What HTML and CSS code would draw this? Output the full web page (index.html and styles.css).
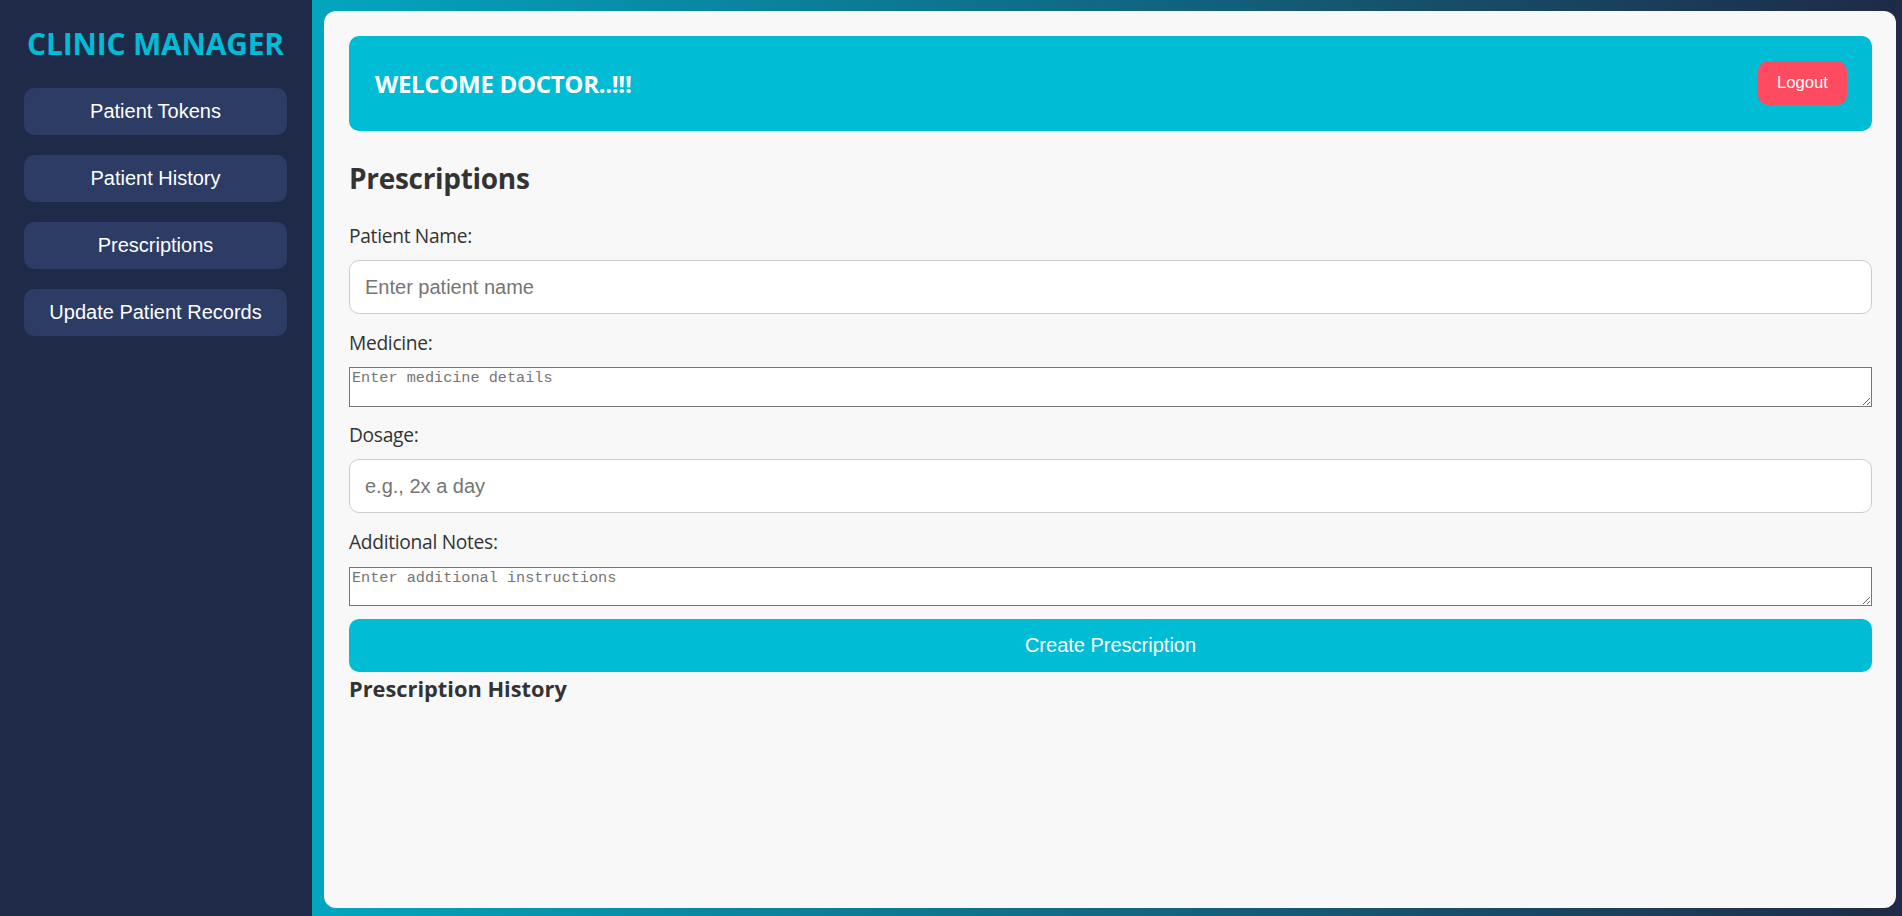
FILE: index.html
```html
<!DOCTYPE html>
<html lang="en">
<head>
<meta charset="utf-8">
<title>Clinic Manager</title>
<link rel="stylesheet" href="styles.css">
</head>
<body>
  <aside class="sidebar">
    <h2 class="brand">CLINIC MANAGER</h2>
    <nav class="nav">
      <button class="nav-btn">Patient Tokens</button>
      <button class="nav-btn">Patient History</button>
      <button class="nav-btn">Prescriptions</button>
      <button class="nav-btn">Update Patient Records</button>
    </nav>
  </aside>
  <main class="main">
    <section class="card">
      <header class="topbar">
        <h3 class="welcome">WELCOME DOCTOR..!!!</h3>
        <button class="logout">Logout</button>
      </header>
      <h2 class="page-title">Prescriptions</h2>
      <form class="form">
        <label class="lbl lbl-first" for="pname">Patient Name:</label>
        <input class="field field-1" id="pname" type="text" placeholder="Enter patient name">
        <label class="lbl lbl-2" for="med">Medicine:</label>
        <textarea class="area area-1" id="med" placeholder="Enter medicine details"></textarea>
        <label class="lbl lbl-3" for="dose">Dosage:</label>
        <input class="field field-2" id="dose" type="text" placeholder="e.g., 2x a day">
        <label class="lbl lbl-4" for="notes">Additional Notes:</label>
        <textarea class="area area-2" id="notes" placeholder="Enter additional instructions"></textarea>
        <button type="button" class="submit">Create Prescription</button>
      </form>
      <h3 class="history">Prescription History</h3>
    </section>
  </main>
</body>
</html>
```

FILE: styles.css
```css
html, body {
  height: 100%;
}
body {
  margin: 0;
  display: flex;
  font-family: "Open Sans", "Noto Sans", sans-serif;
  color: #333;
  overflow: hidden;
}

/* Sidebar */
.sidebar {
  width: 312px;
  flex: 0 0 312px;
  box-sizing: border-box;
  background: #1f2a48;
  padding: 24px 25px 24px 24px;
}
.brand {
  margin: 0 0 24px;
  font-size: 30px;
  line-height: 40px;
  font-weight: 700;
  color: #00bcd4;
  text-align: center;
  letter-spacing: -0.2px;
}
.nav {
  display: flex;
  flex-direction: column;
  gap: 20px;
}
.nav-btn {
  height: 47px;
  border: none;
  border-radius: 10px;
  background: #2c3c64;
  color: #fff;
  font-family: "Liberation Sans", Arial, sans-serif;
  font-size: 20px;
  cursor: pointer;
}

/* Main */
.main {
  flex: 1;
  display: flex;
  flex-direction: column;
  padding: 11px 6px 8px 12px;
  background: linear-gradient(to right, #03a6bf 0%, #1e2a47 100%);
}
.card {
  flex: 1;
  background: #f8f8f8;
  border-radius: 12px;
  padding: 25px 24px 0 25px;
}
.topbar {
  height: 95px;
  box-sizing: border-box;
  padding: 0 25px 0 26px;
  background: #00bcd4;
  border-radius: 10px;
  display: flex;
  align-items: center;
  justify-content: space-between;
}
.welcome {
  margin: 0;
  color: #fff;
  font-size: 24px;
  line-height: 32px;
  font-weight: 700;
  letter-spacing: -0.3px;
}
.logout {
  height: 44px;
  padding: 0 19px;
  margin-top: -2px;
  border: none;
  border-radius: 10px;
  background: #ff4b5f;
  color: #fff;
  font-family: "Liberation Sans", Arial, sans-serif;
  font-size: 16.7px;
  cursor: pointer;
}
.page-title {
  margin: 27.5px 0 0;
  font-size: 28px;
  line-height: 38px;
  font-weight: 700;
  letter-spacing: -0.3px;
  color: #333;
}

/* Form */
.form {
  display: flex;
  flex-direction: column;
}
.lbl {
  display: block;
  font-size: 19.2px;
  line-height: 26px;
  letter-spacing: -0.3px;
  color: #333;
}
.lbl-first { margin-top: 26.5px; }
.lbl-2 { margin-top: 15.5px; }
.lbl-3 { margin-top: 14.5px; }
.lbl-4 { margin-top: 15.7px; }

.field {
  box-sizing: border-box;
  height: 54px;
  padding: 0 15px;
  border: 1px solid #ccc;
  border-radius: 10px;
  background: #fff;
  font-family: "Liberation Sans", Arial, sans-serif;
  font-size: 20px;
  color: #333;
}
.field::placeholder,
.area::placeholder {
  color: #757575;
}
.field-1 { margin-top: 11px; }
.field-2 { margin-top: 11.8px; }

.area {
  box-sizing: border-box;
  padding: 1px 2px 2px;
  border: 1px solid #767676;
  background: #fff;
  font-family: "Liberation Mono", "DejaVu Sans Mono", monospace;
  font-size: 15.2px;
}
.area-1 { margin-top: 11.5px; height: 40px; }
.area-2 { margin-top: 11.7px; height: 39px; }

.submit {
  margin-top: 13.3px;
  height: 52.7px;
  border: none;
  border-radius: 10px;
  background: #00bcd4;
  color: #fff;
  font-family: "Liberation Sans", Arial, sans-serif;
  font-size: 20px;
  cursor: pointer;
}
.history {
  margin: 2.2px 0 0;
  font-size: 21.8px;
  line-height: 29px;
  font-weight: 700;
  color: #333;
}
```
